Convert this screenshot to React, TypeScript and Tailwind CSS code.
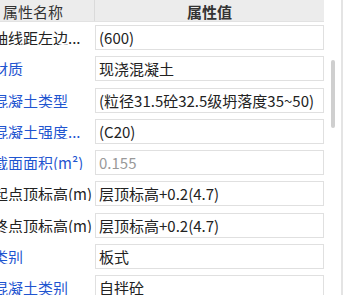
import React from "react";

type Row = { label: string; value: string; blue: boolean; gray?: boolean };

const rows: Row[] = [
  { label: "轴线距左边...", value: "(600)", blue: false },
  { label: "材质", value: "现浇混凝土", blue: true },
  { label: "混凝土类型", value: "(粒径31.5砼32.5级坍落度35~50)", blue: true },
  { label: "混凝土强度...", value: "(C20)", blue: true },
  { label: "截面面积(m²)", value: "0.155", blue: true, gray: true },
  { label: "起点顶标高(m)", value: "层顶标高+0.2(4.7)", blue: false },
  { label: "终点顶标高(m)", value: "层顶标高+0.2(4.7)", blue: false },
  { label: "类别", value: "板式", blue: true },
  { label: "混凝土类别", value: "自拌砼", blue: true },
];

export default function App() {
  return (
    <div
      className="w-[343px] h-[295px] overflow-hidden bg-white flex text-[15px] leading-none"
      style={{ fontFamily: '"Microsoft YaHei", "Noto Sans CJK SC", sans-serif' }}
    >
      <div className="w-[324px] flex flex-col">
        <div className="h-[22px] shrink-0 flex bg-[#ececec] border-b border-[#e2e2e2]">
          <div className="w-[95px] border-r border-[#dadada] flex items-center pl-[3px] pt-[1px] text-[#333]">
            属性名称
          </div>
          <div className="flex-1 flex items-center justify-center pt-[1px] font-bold text-[#333]">
            属性值
          </div>
        </div>
        {rows.map((r) => (
          <div key={r.label} className="h-[31.25px] flex items-center shrink-0">
            <div className="w-[95px] overflow-hidden whitespace-nowrap">
              <span
                className={`ml-[-7px] ${r.blue ? "text-[#1f55d0]" : "text-[#222]"}`}
              >
                {r.label}
              </span>
            </div>
            <div className="flex-1 h-[25px] border border-[#e0e0e0] bg-white flex items-center pl-[3px] whitespace-nowrap overflow-hidden">
              <span className={r.gray ? "text-[#999]" : "text-[#222]"}>{r.value}</span>
            </div>
          </div>
        ))}
      </div>
      <div className="w-[17px] relative">
        <div className="absolute left-[7px] top-[60px] w-[4px] h-[68px] rounded-full bg-[#cfcfcf]" />
      </div>
      <div className="w-[2px] bg-[#e4e4e4]" />
    </div>
  );
}
